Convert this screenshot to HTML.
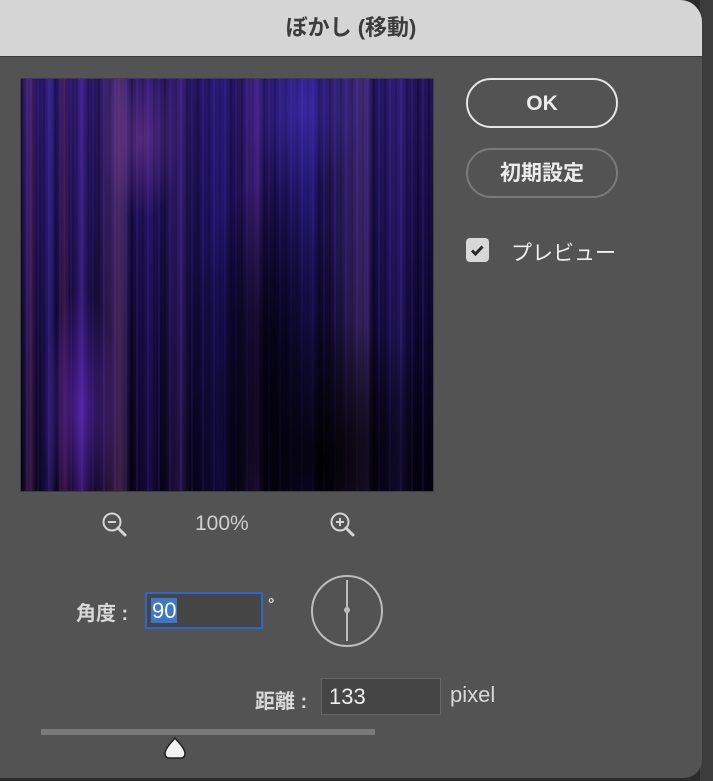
<!DOCTYPE html>
<html><head><meta charset="utf-8"><style>
body{margin:0;width:713px;height:781px;background:#2b2b2b;position:relative;overflow:hidden;font-family:"Liberation Sans","Noto Sans CJK JP",sans-serif}
.side{position:absolute;left:700px;top:0;width:13px;height:781px;background:#3c3c3c}
.dlg{position:absolute;left:0;top:0;width:702px;height:778px;background:#535353;border-radius:0 22px 18px 0;overflow:hidden}
.title{position:absolute;left:0;top:0;width:702px;height:56px;background:#d5d5d5;border-bottom:1px solid #3a3a3a;text-align:center;line-height:56px;font-size:22px;font-weight:bold;color:#3c3c3c}
.pv{position:absolute;left:21px;top:79px;width:412px;height:412px;outline:1px solid #3e3e3e;
background:
radial-gradient(ellipse 150px 140px at 300px 380px,rgba(0,0,0,.85),transparent),
radial-gradient(ellipse 80px 160px at 250px 260px,rgba(0,0,8,.7),transparent),
radial-gradient(ellipse 60px 80px at 280px 30px,rgba(80,60,220,.35),transparent),
radial-gradient(ellipse 40px 120px at 60px 330px,rgba(120,50,220,.5),transparent),
radial-gradient(ellipse 40px 80px at 120px 60px,rgba(170,80,180,.35),transparent),
linear-gradient(90deg,transparent 0,rgba(170,80,190,.3) 10px,transparent 16px,rgba(90,60,220,.35) 30px,transparent 36px,rgba(170,60,150,.3) 44px,transparent 50px,rgba(120,60,230,.35) 60px,transparent 72px,rgba(190,110,200,.3) 100px,transparent 110px,rgba(80,40,200,.25) 130px,transparent 140px,rgba(130,70,220,.25) 160px,transparent 170px,rgba(60,40,200,.3) 200px,transparent 215px,rgba(140,70,230,.3) 235px,transparent 245px,rgba(70,50,230,.3) 290px,transparent 300px,rgba(160,110,220,.25) 345px,transparent 352px,rgba(90,60,220,.25) 380px,transparent 390px),
repeating-linear-gradient(90deg,rgba(0,0,0,.3) 0 2px,transparent 2px 5px,rgba(120,80,220,.12) 5px 7px,transparent 7px 11px),
linear-gradient(180deg,#22145c 0%,#160c44 35%,#0c062c 65%,#050214 100%)}
.zm{position:absolute;top:512px;font-size:21px;color:#cfcfcf}
.btn{position:absolute;left:466px;width:152px;height:50px;border-radius:25px;box-sizing:border-box;text-align:center;color:#ececec;font-size:21px;line-height:47px;font-weight:bold}
.lbl{position:absolute;color:#d8d8d8;font-size:20px;font-weight:bold}
.inp{position:absolute;background:#454545;box-sizing:border-box;color:#eee;font-size:22px;line-height:30px}
</style></head><body>
<div class="side"></div>
<div class="dlg">
<div class="title">ぼかし (移動)</div>
<div class="pv"></div>
<svg style="position:absolute;left:100px;top:510px" width="30" height="30" viewBox="0 0 30 30"><circle cx="12" cy="12" r="8.5" fill="none" stroke="#d5d5d5" stroke-width="2"/><line x1="8" y1="12" x2="16" y2="12" stroke="#d5d5d5" stroke-width="2"/><line x1="18" y1="18" x2="25" y2="25" stroke="#d5d5d5" stroke-width="3" stroke-linecap="round"/></svg>
<div class="zm" style="left:195px">100%</div>
<svg style="position:absolute;left:328px;top:510px" width="30" height="30" viewBox="0 0 30 30"><circle cx="12" cy="12" r="8.5" fill="none" stroke="#d5d5d5" stroke-width="2"/><line x1="8" y1="12" x2="16" y2="12" stroke="#d5d5d5" stroke-width="2"/><line x1="12" y1="8" x2="12" y2="16" stroke="#d5d5d5" stroke-width="2"/><line x1="18" y1="18" x2="25" y2="25" stroke="#d5d5d5" stroke-width="3" stroke-linecap="round"/></svg>
<div class="btn" style="top:78px;border:2px solid #e6e6e6">OK</div>
<div class="btn" style="top:148px;border:2px solid #7a7a7a">初期設定</div>
<div style="position:absolute;left:466px;top:238px;width:23px;height:24px;background:#d8d8d8;border-radius:4px"><svg width="23" height="24" viewBox="0 0 23 24"><path d="M6 12.5l3.5 3.5 7-7.5" fill="none" stroke="#2a2a2a" stroke-width="3"/></svg></div>
<div class="lbl" style="left:511px;top:237px;font-size:21px;font-weight:normal;color:#eee">プレビュー</div>
<div class="lbl" style="left:76px;top:597px">角度 :</div>
<div class="inp" style="left:145px;top:592px;width:118px;height:37px;border:2px solid #2c68c9;padding:2px 4px"><span style="background:#3c78c6;color:#fff;padding:0 1px">90</span></div>
<div class="lbl" style="left:268px;top:596px;font-size:16px">°</div>
<svg style="position:absolute;left:309px;top:573px" width="76" height="76" viewBox="0 0 76 76"><circle cx="38" cy="38" r="35" fill="none" stroke="#bdbdbd" stroke-width="2"/><line x1="38" y1="7" x2="38" y2="68" stroke="#bdbdbd" stroke-width="2"/><circle cx="38" cy="37" r="3" fill="#bdbdbd"/></svg>
<div class="lbl" style="left:255px;top:685px">距離 :</div>
<div class="inp" style="left:321px;top:678px;width:120px;height:37px;border:1px solid #666;padding:3px 7px">133</div>
<div class="lbl" style="left:450px;top:682px;font-size:22px;font-weight:normal">pixel</div>
<div style="position:absolute;left:41px;top:729px;width:334px;height:6px;background:#7a7a7a"></div>
<svg style="position:absolute;left:161px;top:736px" width="28" height="24" viewBox="0 0 28 24"><path d="M14 2 C11 6 5 11 4 17 C4 21 6 22 8 22 L20 22 C22 22 24 21 24 17 C23 11 17 6 14 2Z" fill="#f2f2f2" stroke="#222" stroke-width="1.5"/></svg>
</div>
</body></html>
